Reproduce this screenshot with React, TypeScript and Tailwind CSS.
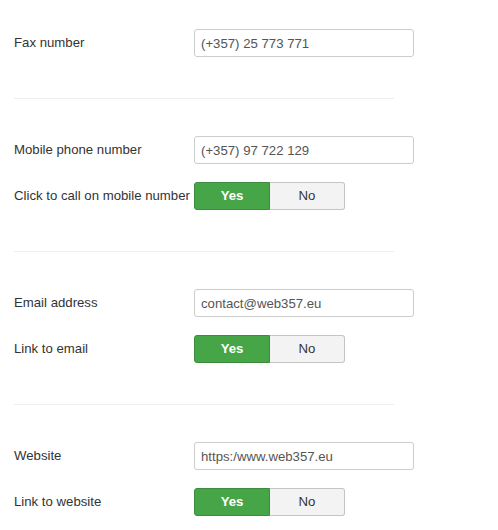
import React from 'react';

type Field =
  | { kind: 'text'; label: string; value: string }
  | { kind: 'yesno'; label: string };

const SECTIONS: Field[][] = [
  [{ kind: 'text', label: 'Fax number', value: '(+357) 25 773 771' }],
  [
    { kind: 'text', label: 'Mobile phone number', value: '(+357) 97 722 129' },
    { kind: 'yesno', label: 'Click to call on mobile number' },
  ],
  [
    { kind: 'text', label: 'Email address', value: 'contact@web357.eu' },
    { kind: 'yesno', label: 'Link to email' },
  ],
  [
    { kind: 'text', label: 'Website', value: 'https:/www.web357.eu' },
    { kind: 'yesno', label: 'Link to website' },
  ],
];

// ── Yes / No toggle ───────────────────────────────────────────────
function YesNo() {
  return (
    <div className="flex h-[28px] w-[151px]">
      <button className="w-[76px] h-full rounded-l-[3px] border border-[#3d8b3d] bg-[#46a546] text-white font-bold text-[13.2px]">
        Yes
      </button>
      <button className="flex-1 h-full rounded-r-[3px] border border-l-0 border-[#c4c4c4] bg-[#f3f3f3] text-[#333] text-[13.2px]">
        No
      </button>
    </div>
  );
}

function Row({ field }: { field: Field }) {
  return (
    <div className="flex items-center h-[28px]">
      <label className="w-[180px] shrink-0 whitespace-nowrap text-[13.2px] text-[#333]">{field.label}</label>
      {field.kind === 'text' ? (
        <input
          readOnly
          value={field.value}
          className="w-[220px] h-[28px] px-[6px] rounded-[3px] border border-[#cccccc] bg-white text-[13.2px] text-[#555] outline-none"
        />
      ) : (
        <YesNo />
      )}
    </div>
  );
}

export default function App() {
  return (
    <div
      className="min-h-[530px] bg-white pl-[14px] pt-[29px]"
      style={{ fontFamily: '"Liberation Sans", Arial, sans-serif' }}
    >
      {SECTIONS.map((rows, i) => (
        <div key={i}>
          {i > 0 && <div className="w-[380px] h-px bg-[#eeeeee] mt-[41px] mb-[37px]" />}
          <div className="flex flex-col gap-[18px]">
            {rows.map((f) => (
              <Row key={f.label} field={f} />
            ))}
          </div>
        </div>
      ))}
    </div>
  );
}
